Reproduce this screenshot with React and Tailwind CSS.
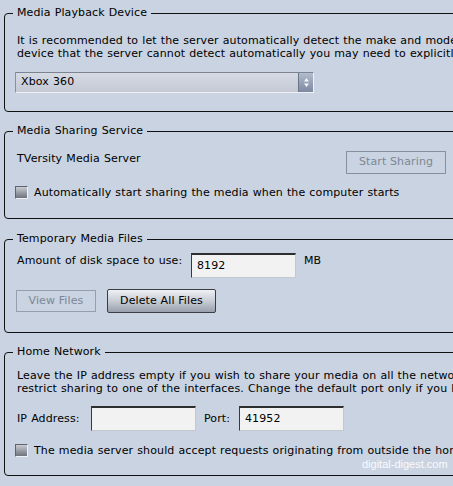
import React from 'react';

const font = { fontFamily: '"DejaVu Sans", Verdana, sans-serif' };

const Legend = ({ children }) => (
  <legend className="ml-[-2px] px-[4px] text-[11px] leading-[14px] text-black">{children}</legend>
);

const Checkbox = () => (
  <span className="block w-[13px] h-[13px] shrink-0 border border-t-[#5d6470] border-l-[#5d6470] border-r-[#eef1f6] border-b-[#eef1f6] bg-gradient-to-b from-[#c9ccd2] to-[#6f747d]" />
);

const TextBox = ({ value, className = '' }) => (
  <div
    className={`h-[25px] w-[105px] shrink-0 flex items-center pl-[5px] bg-[#f2f2f2] border border-t-[#2e2e2e] border-l-[#3a3a3a] border-r-[#c4c8cf] border-b-[#c4c8cf] border-t-2 text-[11px] text-black ${className}`}
  >
    {value}
  </div>
);

export default function App() {
  return (
    <div
      className="relative w-[453px] h-[486px] overflow-hidden bg-[#c9d3e1] text-black tracking-[0.12px] [word-spacing:0.4px]"
      style={font}
    >
      {/* Media Playback Device */}
      <fieldset className="w-[560px] ml-[4px] mt-[6px] border border-[#111] rounded-[4px] px-[10px] pb-[18px]">
        <Legend>Media Playback Device</Legend>
        <p className="mt-[14px] pl-[2px] text-[11px] leading-[13px] whitespace-nowrap">
          It is recommended to let the server automatically detect the make and model of the device. For a
          <br />
          device that the server cannot detect automatically you may need to explicitly select it from the list.
        </p>
        <div className="mt-[12px] flex w-[299px] h-[21px] border border-t-[#7c8391] border-l-[#8a909c] border-r-[#eef1f6] border-b-[#eef1f6]">
          <div className="flex-1 flex items-center pl-[5px] bg-gradient-to-b from-[#d6dae3] to-[#c4c9d5] text-[11px]">
            Xbox 360
          </div>
          <div className="w-[15px] flex items-center justify-center border-l border-[#6a7588] bg-gradient-to-b from-[#b2bccd] to-[#7d89a1]">
            <svg width="7" height="13" viewBox="0 0 7 13">
              <path d="M3.5 2 L6 5.5 L1 5.5 Z" fill="#f2f5fa" />
              <path d="M3.5 11 L6 7.5 L1 7.5 Z" fill="#f2f5fa" />
            </svg>
          </div>
        </div>
      </fieldset>

      {/* Media Sharing Service */}
      <fieldset className="w-[560px] ml-[4px] mt-[12px] border border-[#111] rounded-[4px] px-[10px] pb-[19px]">
        <Legend>Media Sharing Service</Legend>
        <div className="mt-[13px] flex items-start">
          <div className="w-[331px] pl-[2px] pt-[1px] text-[11px] leading-[14px]">TVersity Media Server</div>
          <button className="w-[100px] h-[23px] border border-[#8790a0] text-[11px] text-[#7d8795]">
            Start Sharing
          </button>
        </div>
        <div className="mt-[12px] flex items-center gap-[6px]">
          <Checkbox />
          <span className="text-[11px] leading-[13px] whitespace-nowrap">
            Automatically start sharing the media when the computer starts
          </span>
        </div>
      </fieldset>

      {/* Temporary Media Files */}
      <fieldset className="w-[560px] ml-[4px] mt-[13px] border border-[#111] rounded-[4px] px-[10px] pb-[19px]">
        <Legend>Temporary Media Files</Legend>
        <div className="mt-[7px] flex items-start">
          <div className="w-[176px] pl-[2px] pt-[1px] text-[11px] leading-[14px]">Amount of disk space to use:</div>
          <TextBox value="8192" />
          <span className="ml-[8px] pt-[1px] text-[11px] leading-[14px]">MB</span>
        </div>
        <div className="mt-[11px] flex items-start">
          <button className="ml-[1px] mt-[1px] w-[80px] h-[22px] border border-[#959eac] text-[11px] text-[#7d8795]">
            View Files
          </button>
          <button className="ml-[11px] w-[109px] h-[24px] border border-[#3b3d42] rounded-[2px] bg-gradient-to-b from-[#eef0f4] via-[#c8ccd4] to-[#99a0ac] text-[11px] text-black">
            Delete All Files
          </button>
        </div>
      </fieldset>

      {/* Home Network */}
      <fieldset className="w-[560px] ml-[4px] mt-[12px] border border-[#111] rounded-[4px] px-[10px] pb-[18px]">
        <Legend>Home Network</Legend>
        <p className="mt-[10px] pl-[2px] text-[11px] leading-[13px] whitespace-nowrap">
          Leave the IP address empty if you wish to share your media on all the network interfaces, or specify it to
          <br />
          restrict sharing to one of the interfaces. Change the default port only if you know what you are doing.
        </p>
        <div className="mt-[11px] flex items-center">
          <div className="w-[76px] pl-[2px] text-[11px] leading-[14px]">IP Address:</div>
          <TextBox value="" />
          <div className="ml-[8px] w-[35px] text-[11px] leading-[14px]">Port:</div>
          <TextBox value="41952" />
        </div>
        <div className="mt-[13px] flex items-center gap-[6px]">
          <Checkbox />
          <span className="text-[11px] leading-[13px] whitespace-nowrap">
            The media server should accept requests originating from outside the home network
          </span>
        </div>
      </fieldset>

      {/* watermark */}
      <div
        className="absolute left-[362px] top-[457px] text-[11px] leading-[14px] text-white/90 tracking-normal [word-spacing:0px]"
        style={{ fontFamily: '"Liberation Sans", Arial, sans-serif' }}
      >
        digital-digest.com
      </div>
    </div>
  );
}
